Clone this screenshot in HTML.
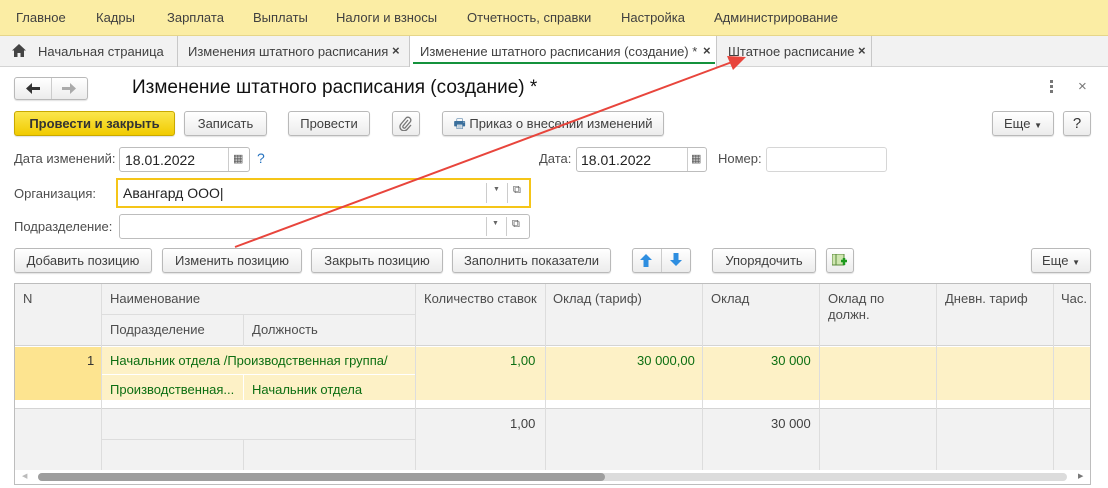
<!DOCTYPE html>
<html><head><meta charset="utf-8"><style>
*{box-sizing:border-box;margin:0;padding:0}
body{width:1108px;height:488px;position:relative;overflow:hidden;background:#fff;font-family:"Liberation Sans",Arial,sans-serif;font-size:13px;color:#404040}
.a{position:absolute;white-space:nowrap}
.menu{left:0;top:0;width:1108px;height:36px;background:#fbeda4;border-bottom:1px solid #e6d68a}
.tabs{left:0;top:36px;width:1108px;height:31px;background:#f2f2f2;border-bottom:1px solid #d4d4d4}
.sep{position:absolute;top:36px;width:1px;height:31px;background:#c8c8c8}
.btn{position:absolute;height:25px;border:1px solid #b9b9b9;border-radius:3px;background:linear-gradient(#fff,#ececec);text-align:center;line-height:23px;color:#404040;box-shadow:0 1px 1px rgba(0,0,0,.12)}
.inp{position:absolute;border:1px solid #bdbdbd;border-radius:3px;background:#fff}
.lbl{position:absolute;color:#4d4d4d}
.hd{color:#4d4d4d}
.g{color:#0c6e12}
</style></head><body>
<div class="a menu"></div>
<div class="a" style="left:16px;top:10px">Главное</div>
<div class="a" style="left:96px;top:10px">Кадры</div>
<div class="a" style="left:167px;top:10px">Зарплата</div>
<div class="a" style="left:253px;top:10px">Выплаты</div>
<div class="a" style="left:336px;top:10px">Налоги и взносы</div>
<div class="a" style="left:467px;top:10px">Отчетность, справки</div>
<div class="a" style="left:621px;top:10px">Настройка</div>
<div class="a" style="left:714px;top:10px">Администрирование</div>

<div class="a tabs"></div>
<div class="a" style="left:410px;top:36px;width:306px;height:32px;background:#fff"></div>
<div class="a" style="left:413px;top:62px;width:302px;height:2px;background:#14923c"></div>
<div class="sep" style="left:177px"></div>
<div class="sep" style="left:409px"></div>
<div class="sep" style="left:716px"></div>
<div class="sep" style="left:871px"></div>
<svg class="a" style="left:12px;top:44px" width="14" height="13" viewBox="0 0 14 13"><path d="M7 0 L14 6.5 H12 V13 H8.5 V9 H5.5 V13 H2 V6.5 H0Z" fill="#444"/></svg>
<div class="a" style="left:38px;top:44px">Начальная страница</div>
<div class="a" style="left:188px;top:44px">Изменения штатного расписания</div>
<div class="a" style="left:392px;top:43px;font-weight:bold">×</div>
<div class="a" style="left:420px;top:44px">Изменение штатного расписания (создание) *</div>
<div class="a" style="left:703px;top:43px;font-weight:bold">×</div>
<div class="a" style="left:728px;top:44px">Штатное расписание</div>
<div class="a" style="left:858px;top:43px;font-weight:bold">×</div>

<div class="btn" style="left:14px;top:77px;width:74px;height:23px"></div>
<div class="a" style="left:51px;top:78px;width:1px;height:21px;background:#ccc"></div>
<svg class="a" style="left:26px;top:83px" width="14" height="11"><path d="M0 5.5 L6 0 V4 H14 V7 H6 V11Z" fill="#333"/></svg>
<svg class="a" style="left:62px;top:83px" width="14" height="11"><path d="M14 5.5 L8 0 V4 H0 V7 H8 V11Z" fill="#aaa"/></svg>
<div class="a" style="left:132px;top:77px;font-size:19px;color:#111">Изменение штатного расписания (создание) *</div>
<div class="a" style="left:1050px;top:80px;width:3px;height:3px;background:#777;box-shadow:0 5px #777,0 10px #777"></div>
<div class="a" style="left:1078px;top:78px;color:#777;font-size:15px">×</div>

<div class="btn" style="left:14px;top:111px;width:161px;background:linear-gradient(#fbe64d,#f1cb00);border-color:#c9a900;font-weight:bold;color:#333">Провести и закрыть</div>
<div class="btn" style="left:184px;top:111px;width:83px">Записать</div>
<div class="btn" style="left:288px;top:111px;width:82px">Провести</div>
<div class="btn" style="left:392px;top:111px;width:28px"></div>
<svg class="a" style="left:399px;top:116px" width="14" height="15" viewBox="0 0 14 15"><path d="M9 4 L4 10 a1.5 1.5 0 0 0 2 2 L11.5 5.5 a3 3 0 0 0 -4 -4 L2 8 a4 4 0 0 0 6 5.5 L12 9" fill="none" stroke="#777" stroke-width="1.3"/></svg>
<div class="btn" style="left:442px;top:111px;width:222px"><span style="color:#3a6f9c">🖶</span> Приказ о внесении изменений</div>
<div class="btn" style="left:992px;top:111px;width:62px">Еще <span style="font-size:8px">▼</span></div>
<div class="btn" style="left:1063px;top:111px;width:28px;font-size:15px;color:#333">?</div>

<div class="lbl" style="left:14px;top:151px">Дата изменений:</div>
<div class="inp" style="left:119px;top:147px;width:131px;height:25px"><span class="a" style="left:5px;top:4px;color:#222;font-size:14px">18.01.2022</span><span class="a" style="left:108px;top:0;width:1px;height:23px;background:#ccc"></span><span class="a" style="left:113px;top:4px;font-size:11px;color:#555">▦</span></div>
<div class="a" style="left:257px;top:150px;color:#2673c0;font-size:14px">?</div>
<div class="lbl" style="left:539px;top:151px">Дата:</div>
<div class="inp" style="left:576px;top:147px;width:131px;height:25px"><span class="a" style="left:4px;top:4px;color:#222;font-size:14px">18.01.2022</span><span class="a" style="left:110px;top:0;width:1px;height:23px;background:#ccc"></span><span class="a" style="left:114px;top:4px;font-size:11px;color:#555">▦</span></div>
<div class="lbl" style="left:718px;top:151px">Номер:</div>
<div class="inp" style="left:766px;top:147px;width:121px;height:25px;border-color:#d6d6d6"></div>

<div class="lbl" style="left:14px;top:186px">Организация:</div>
<div class="a" style="left:116px;top:178px;width:415px;height:30px;border:2px solid #f5c518;background:#fff"><span class="a" style="left:5px;top:5px;color:#222;font-size:14px">Авангард ООО|</span><span class="a" style="left:368px;top:3px;width:1px;height:20px;background:#ccc"></span><span class="a" style="left:375px;top:6px;font-size:7px;color:#666">▼</span><span class="a" style="left:389px;top:3px;width:1px;height:20px;background:#ccc"></span><span class="a" style="left:395px;top:4px;font-size:11px;color:#555">⧉</span></div>
<div class="lbl" style="left:14px;top:219px">Подразделение:</div>
<div class="inp" style="left:119px;top:214px;width:411px;height:25px"><span class="a" style="left:366px;top:2px;width:1px;height:19px;background:#ccc"></span><span class="a" style="left:372px;top:5px;font-size:7px;color:#666">▼</span><span class="a" style="left:386px;top:2px;width:1px;height:19px;background:#ccc"></span><span class="a" style="left:392px;top:3px;font-size:11px;color:#555">⧉</span></div>

<div class="btn" style="left:14px;top:248px;width:138px">Добавить позицию</div>
<div class="btn" style="left:162px;top:248px;width:140px">Изменить позицию</div>
<div class="btn" style="left:311px;top:248px;width:132px">Закрыть позицию</div>
<div class="btn" style="left:452px;top:248px;width:159px">Заполнить показатели</div>
<div class="btn" style="left:632px;top:248px;width:59px"></div>
<div class="a" style="left:661px;top:249px;width:1px;height:23px;background:#ccc"></div>
<svg class="a" style="left:640px;top:254px" width="12" height="13"><path d="M6 0 L12 6 H8.5 V13 H3.5 V6 H0Z" fill="#2e8ee0"/></svg>
<svg class="a" style="left:670px;top:253px" width="12" height="13"><path d="M6 13 L12 7 H8.5 V0 H3.5 V7 H0Z" fill="#2e8ee0"/></svg>
<div class="btn" style="left:712px;top:248px;width:104px">Упорядочить</div>
<div class="btn" style="left:826px;top:248px;width:28px"></div>
<svg class="a" style="left:832px;top:254px" width="16" height="14"><rect x="0" y="0" width="12" height="11" fill="#cfe6b0" stroke="#5a8a3a"/><line x1="4" y1="0" x2="4" y2="11" stroke="#5a8a3a"/><path d="M9 7h6M12 4v7" stroke="#1d9a1d" stroke-width="2.5"/></svg>
<div class="btn" style="left:1031px;top:248px;width:60px">Еще <span style="font-size:8px">▼</span></div>

<div class="a" style="left:14px;top:283px;width:1077px;height:202px;border:1px solid #bdbdbd;background:#fff"></div>
<div class="a" style="left:15px;top:284px;width:1075px;height:62px;background:#f2f2f2;border-bottom:1px solid #d4d4d4"></div>
<div class="a" style="left:15px;top:347px;width:1075px;height:53px;background:#fdf1c6"></div>
<div class="a" style="left:15px;top:347px;width:86px;height:53px;background:#fde490"></div>
<div class="a" style="left:15px;top:408px;width:1075px;height:62px;background:#f2f2f2;border-top:1px solid #d4d4d4"></div>
<div class="a" style="left:101px;top:284px;width:1px;height:186px;background:#ddd"></div>
<div class="a" style="left:415px;top:284px;width:1px;height:186px;background:#ddd"></div>
<div class="a" style="left:545px;top:284px;width:1px;height:186px;background:#ddd"></div>
<div class="a" style="left:702px;top:284px;width:1px;height:186px;background:#ddd"></div>
<div class="a" style="left:819px;top:284px;width:1px;height:186px;background:#ddd"></div>
<div class="a" style="left:936px;top:284px;width:1px;height:186px;background:#ddd"></div>
<div class="a" style="left:1053px;top:284px;width:1px;height:186px;background:#ddd"></div>
<div class="a" style="left:102px;top:314px;width:313px;height:1px;background:#ddd"></div>
<div class="a" style="left:243px;top:315px;width:1px;height:31px;background:#ddd"></div>
<div class="a" style="left:102px;top:374px;width:313px;height:1px;background:#fff"></div>
<div class="a" style="left:243px;top:375px;width:1px;height:25px;background:#fff"></div>
<div class="a" style="left:102px;top:439px;width:313px;height:1px;background:#ddd"></div>
<div class="a" style="left:243px;top:440px;width:1px;height:30px;background:#ddd"></div>

<div class="a hd" style="left:23px;top:291px">N</div>
<div class="a hd" style="left:110px;top:291px">Наименование</div>
<div class="a hd" style="left:110px;top:322px">Подразделение</div>
<div class="a hd" style="left:252px;top:322px">Должность</div>
<div class="a hd" style="left:424px;top:291px">Количество ставок</div>
<div class="a hd" style="left:553px;top:291px">Оклад (тариф)</div>
<div class="a hd" style="left:711px;top:291px">Оклад</div>
<div class="a hd" style="left:828px;top:291px;line-height:16px;white-space:normal;width:80px">Оклад по должн.</div>
<div class="a hd" style="left:945px;top:291px">Дневн. тариф</div>
<div class="a hd" style="left:1061px;top:291px">Час.</div>

<div class="a" style="left:87px;top:353px;color:#333">1</div>
<div class="a g" style="left:110px;top:353px">Начальник отдела /Производственная группа/</div>
<div class="a g" style="left:110px;top:382px">Производственная...</div>
<div class="a g" style="left:252px;top:382px">Начальник отдела</div>
<div class="a g" style="left:510px;top:353px">1,00</div>
<div class="a g" style="left:637px;top:353px">30 000,00</div>
<div class="a g" style="left:771px;top:353px">30 000</div>
<div class="a" style="left:510px;top:416px">1,00</div>
<div class="a" style="left:771px;top:416px">30 000</div>

<div class="a" style="left:38px;top:473px;width:1029px;height:8px;background:#dcdcdc;border-radius:4px"></div>
<div class="a" style="left:38px;top:473px;width:567px;height:8px;background:#9e9e9e;border-radius:4px"></div>
<div class="a" style="left:22px;top:472px;font-size:7px;color:#bbb">◀</div>
<div class="a" style="left:1078px;top:472px;font-size:7px;color:#777">▶</div>

<svg class="a" style="left:0;top:0" width="1108" height="488"><line x1="235" y1="247" x2="732" y2="62" stroke="#e8453c" stroke-width="2"/><path d="M746 57 L727 56 L733 70Z" fill="#e8453c"/></svg>
</body></html>
